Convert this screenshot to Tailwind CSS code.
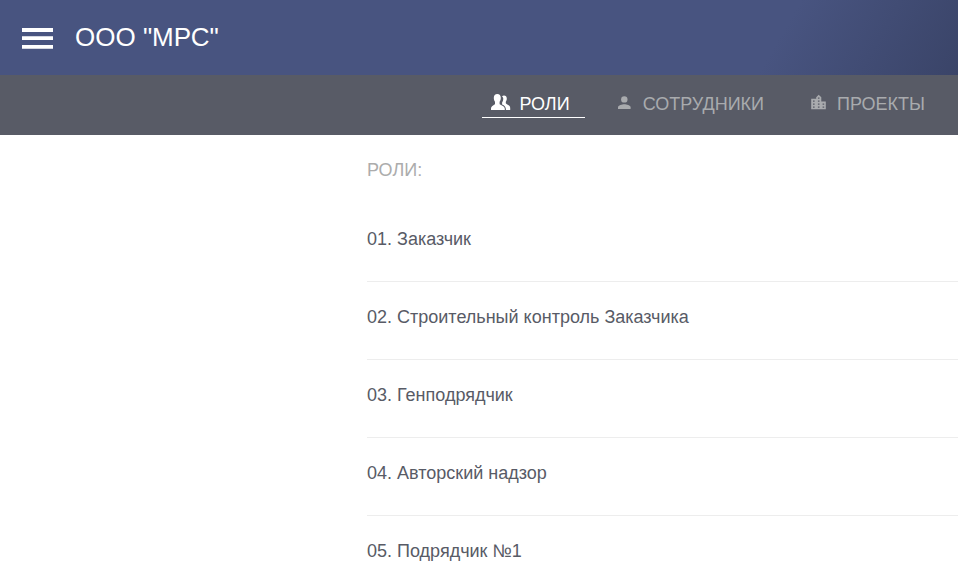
<!DOCTYPE html>
<html lang="ru">
<head>
<meta charset="utf-8">
<meta name="viewport" content="width=device-width, initial-scale=1">
<title>ООО "МРС"</title>
<script src="https://cdn.jsdelivr.net/npm/@tailwindcss/browser@4"></script>
</head>
<body class="bg-white font-['Liberation_Sans',Arial,sans-serif] text-lg text-[#585b66]">
<header class="flex h-[75px] items-start gap-[22px] bg-linear-[120deg,#485480_80%,#3a4468_100%] px-[22px] text-white">
  <button type="button" aria-label="Меню" class="block pt-7">
    <svg class="block h-[21px] w-[31px]" viewBox="0 0 31 21" fill="currentColor" aria-hidden="true"><path d="M0 0h31v4H0zM0 8.300h31v3.700H0zM0 17h31v3.800H0z"/></svg>
  </button>
  <h1 class="pt-[22px] text-[26px] leading-[30px]">ООО "МРС"</h1>
</header>
<nav class="flex h-[60px] items-start justify-end gap-[21px] bg-[#585b66] px-[18px] pt-[15px] text-[#a9abae]">
  <a href="#roles" aria-current="page" class="flex h-7 items-center gap-2 border-b border-white pr-[15px] pl-[9px] text-white">
    <svg class="h-5 w-5" viewBox="0 1 20 20" fill="currentColor" aria-hidden="true"><path d="M11 3.200c.6-.5 1.300-.7 2-.7 1.700 0 2.800 1.100 2.800 3 0 1.400-.4 2.500-1 3.200v1.500c.5 1.200 4.400 1.600 4.400 4.700v2h-4.200c0-3-1.500-4.600-3.900-5.500v-1.800c.8-1.100 1.200-2.400 1.200-3.800 0-.9-.4-1.700-1.300-2.600z"/><path d="M6.300 1c2.200 0 3.500 1.400 3.500 3.800 0 1.700-.5 3-1.200 3.900v2.200c.6 1.300 5.200 1.500 5.200 4.900v1.100H0v-1.100c0-3.400 3.400-3.600 4-4.900V8.700C3.300 7.800 2.800 6.500 2.800 4.800 2.800 2.400 4.100 1 6.300 1z"/></svg>
    <span>РОЛИ</span>
  </a>
  <a href="#staff" class="flex h-7 items-center gap-2 border-b border-transparent pr-[15px] pl-[9px]">
    <svg class="h-5 w-5" viewBox="0 1 20 20" fill="currentColor" aria-hidden="true"><circle cx="9.300" cy="6.400" r="3.200"/><path d="M3 16v-1.700c0-2 4.200-3 6.300-3s6.300 1 6.300 3V16z"/></svg>
    <span>СОТРУДНИКИ</span>
  </a>
  <a href="#projects" class="flex h-7 items-center gap-2 border-b border-transparent pr-[15px] pl-[9px]">
    <svg class="h-5 w-5" viewBox="0 1 20 20" fill="currentColor" aria-hidden="true"><path fill-rule="evenodd" d="M12.300 8.500V4.200L9.700 1.700 7.200 4.200v1.500H2.200v10.600h14.600V8.500zM5.600 14.700H4v-1.300h1.600zm0-3H4v-1.300h1.600zm0-3H4V7.400h1.600zm4.900 6H8.900v-1.300h1.600zm0-3H8.900v-1.300h1.600zm0-3H8.900V7.400h1.600zm0-3H8.900V4.500h1.600zm4.700 9h-1.600v-1.300h1.600zm0-3h-1.600v-1.300h1.600z"/></svg>
    <span>ПРОЕКТЫ</span>
  </a>
</nav>
<main class="pt-[21px] pl-[367px]">
  <h2 class="text-[#acacac]">РОЛИ:</h2>
  <ol class="divide-y divide-[#ededed] pt-5">
    <li class="h-[78px] pt-[21px]"><a href="#role-1">01. Заказчик</a></li>
    <li class="h-[78px] pt-[21px]"><a href="#role-2">02. Строительный контроль Заказчика</a></li>
    <li class="h-[78px] pt-[21px]"><a href="#role-3">03. Генподрядчик</a></li>
    <li class="h-[78px] pt-[21px]"><a href="#role-4">04. Авторский надзор</a></li>
    <li class="pt-[21px]"><a href="#role-5">05. Подрядчик №1</a></li>
  </ol>
</main>
</body>
</html>
